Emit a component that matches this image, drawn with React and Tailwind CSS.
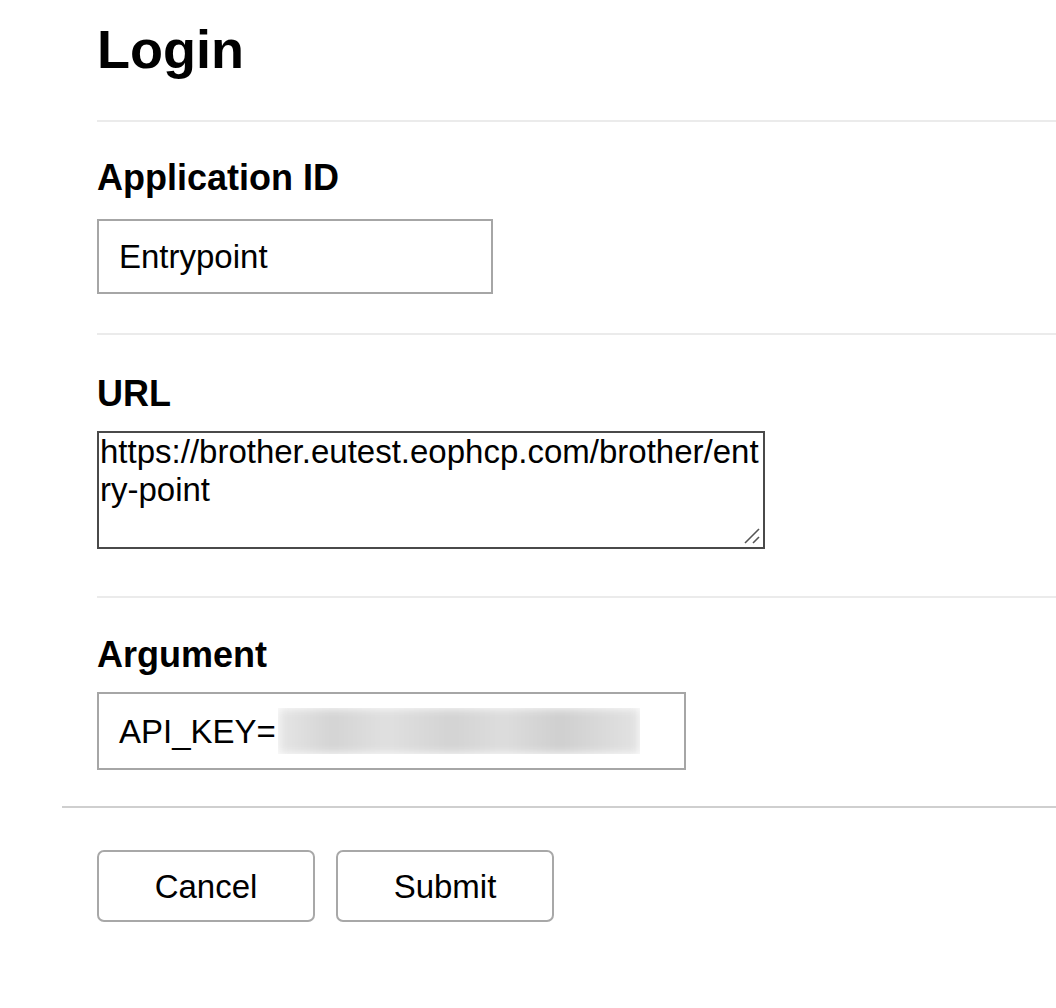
import { useState } from 'react'

function Field({ label, className, children }) {
  return (
    <div className={className}>
      <label className="block text-[36px] font-bold leading-none">{label}</label>
      {children}
    </div>
  )
}

export default function App() {
  const [appId, setAppId] = useState('Entrypoint')
  const [url, setUrl] = useState('https://brother.eutest.eophcp.com/brother/entry-point')

  return (
    <div className="min-h-screen bg-white font-['Liberation_Sans',Arial,sans-serif] text-black">
      <div className="pl-[62px]">
        <div className="pl-[35px]">
          <h1 className="pt-[22px] pb-[44px] text-[54px] font-bold leading-none border-b-2 border-[#ebebeb]">
            Login
          </h1>

          <Field label="Application ID" className="pt-[38px] pb-[39px] border-b-2 border-[#ebebeb]">
            <input
              value={appId}
              onChange={(e) => setAppId(e.target.value)}
              className="mt-[23px] block w-[396px] h-[75px] border-2 border-[#a6a6a6] px-[20px] text-[33px] leading-none outline-none"
            />
          </Field>

          <Field label="URL" className="pt-[41px] pb-[47px] border-b-2 border-[#ebebeb]">
            <div className="relative mt-[19px] w-[668px]">
              <textarea
                value={url}
                onChange={(e) => setUrl(e.target.value)}
                className="block w-[668px] h-[118px] border-2 border-[#4a4a4a] px-[1px] py-0 text-[33px] leading-[1.15] outline-none resize-none"
              />
              {/* resize grip */}
              <svg className="absolute right-[3px] bottom-[3px] pointer-events-none" width="20" height="20" viewBox="0 0 20 20">
                <path d="M3 17 L17 3" stroke="#555" strokeWidth="1.6" />
                <path d="M11 17 L17 11" stroke="#555" strokeWidth="1.6" />
              </svg>
            </div>
          </Field>

          <Field label="Argument" className="pt-[39px] pb-[36px]">
            <div className="mt-[19px] flex items-center w-[589px] h-[78px] border-2 border-[#a6a6a6] pl-[20px] text-[33px] leading-none">
              <span>API_KEY=</span>
              {/* key is hidden behind a blur */}
              <div className="ml-[2px] w-[362px] h-[46px] overflow-hidden">
                <div className="h-full bg-[linear-gradient(90deg,#e6e6e6_0%,#d4d4d4_15%,#e0e0e0_30%,#d3d3d3_48%,#dddddd_62%,#cfcfcf_78%,#e3e3e3_100%)] blur-[5px]" />
              </div>
            </div>
          </Field>
        </div>

        <div className="border-t-2 border-[#cfcfcf]" />

        <div className="pl-[35px] pt-[42px] flex gap-[21px]">
          <button className="w-[218px] h-[72px] rounded-[7px] border-2 border-[#a8a8a8] bg-white text-[33px] leading-none">
            Cancel
          </button>
          <button className="w-[218px] h-[72px] rounded-[7px] border-2 border-[#a8a8a8] bg-white text-[33px] leading-none">
            Submit
          </button>
        </div>
      </div>
    </div>
  )
}
